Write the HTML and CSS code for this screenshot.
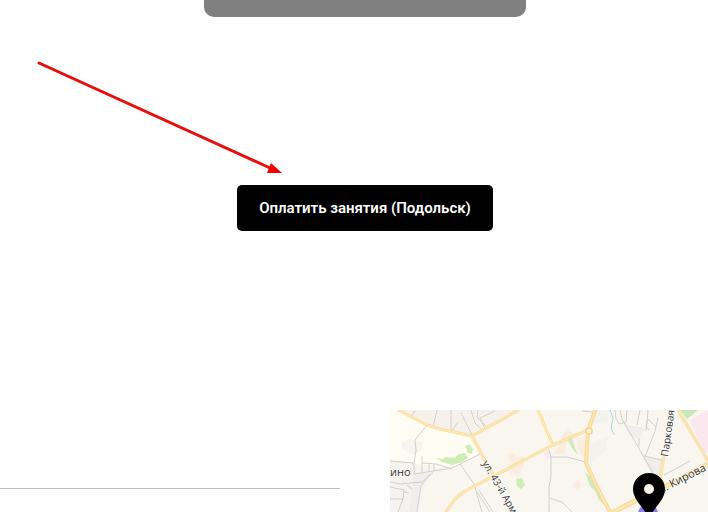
FILE: index.html
```
<!DOCTYPE html>
<html lang="ru">
<head>
    <meta charset="UTF-8">
    <title>Оплата занятий</title>
    <link rel="stylesheet" href="styles.css">
</head>
<body>
<main class="pay">
    <div class="card"></div>
    <button type="button" class="btn">Оплатить занятия (Подольск)</button>
    <svg class="arrow" viewBox="0 0 250 120" aria-hidden="true">
        <path d="M5 7L236 112" stroke="#e90c0c" stroke-width="3" stroke-linecap="round"/>
        <path d="M248 117L233 117L237 107Z" fill="#f40000"/>
    </svg>
</main>
<footer class="contacts">
    <div class="info"><hr class="line"></div>
    <svg class="map" viewBox="390 410 318 102" preserveAspectRatio="xMinYMin slice" role="img" aria-label="Карта">
        <rect x="390" y="410" width="318" height="102" fill="#f9f6ef"/>
        <!-- areas -->
        <path d="M390 410H398L427 425L472 436L480 454L452 468L390 461Z" fill="#fffdf3"/>
        <path d="M400 410H472L520 410L472 435L429 424Z" fill="#f6f2eb"/>
        <path d="M390 461L414 463L431 472L423 490L418 512H390Z" fill="#f5f3f0"/>
        <path d="M402 442L410 438L423 443L422 450L413 455L402 449Z" fill="#f6f5ef"/>
        <path d="M414 474L433 472L422 482L417 512H409Z" fill="#efeeec"/>
        <path d="M595 412L609 410L609 420L594 424ZM590 446L608 436L606 450L590 464Z" fill="#f3f2eb"/>
        <path d="M624 424L645 428L640 439L630 436ZM642 456L662 459L660 480L651 472Z" fill="#efeeea"/>
        <path d="M507 455L511 452L517 457L524 455L524 465L519 476L510 474L513 466ZM563 434L568 429L576 436L567 444L564 455L554 454L558 447ZM573 484L578 480L581 486L577 490L573 488Z" fill="#fbeee1"/>
        <path d="M577 437L588 440L586 458L578 453Z" fill="#fbeee1"/>
        <path d="M690 420L708 410V453L703 452Z" fill="#fbe8ee"/>
        <path d="M544 452L550 450L551 458L546 459Z" fill="#f7e9ef"/>
        <!-- parks -->
        <path d="M436 458L443 459L446 457L454 458L459 454L465 453L468 458L462 462L452 465L442 462ZM465 446L469 444L473 449L472 454L468 453ZM516 479L522 478L525 485L521 489L517 486ZM568 440L572 438L574 445L578 455L573 450ZM585 472L590 476L597 485L601 497L590 486ZM590 478L601 493L606 506L599 500Z" fill="#cfecb4"/>
        <path d="M680 410H698L687 419Z" fill="#c5e9b5"/>
        <!-- small streets -->
        <g fill="none" stroke="#d2d0cd" stroke-width="1">
            <path d="M428 424L415 440L416 450L414 463V474M390 461L414 463M414 474L452 468L480 454M430 474L421 486L417 512"/>
            <path d="M422 456V472M422 463L436 464L452 469M429 463V472M434 464V472M390 482L400 484L422 482L433 473"/>
            <path d="M390 487L404 490L403 499H390M404 492L409 493M403 499L398 512M460 464L474 484L482 512M479 490L493 512M477 492L490 512"/>
            <path d="M415 411L411 417M437 410L433 427M451 410V430M461 413L472 435M458 422L452 431M471 410L475 423L481 429M478 410L477 417L488 428M480 418L495 411M484 427L480 418"/>
            <path d="M549 450L551 457V477L549 487V512M551 457H567L586 462M549 498L562 502L572 512M582 411L593 412"/>
            <path d="M615 410L616 419L619 424L626 422L627 410M620 410L622 419L653 473M640 410L637 425M648 410L646 431M658 418L655 431L645 457M650 430L646 427L648 419L656 427M639 438L639 446M644 456L662 460M664 475L690 461"/>
        </g>
        <path d="M407 485L412 489M610 410L613 418L611 428L614 435" fill="none" stroke="#a5d4ec" stroke-width="1"/>
        <!-- main roads -->
        <g fill="none" stroke-linejoin="round">
            <g stroke="#f5d79c" stroke-width="3">
                <path d="M398 410L427 425L440 429L472 436L490 426L519 410M472 436L482 455L493 474M446 512L455 499L465 491L553 445L588 430M538 410L545 427L553 445M678 410L708 461M664 455L660 480"/>
                <path d="M596 408L588 431L586 463L597 487L610 512" stroke-width="4"/>
                <path d="M610 514L633 502L670 484L708 464" stroke-width="5"/>
            </g>
            <g stroke="#fde7ad" stroke-width="2">
                <path d="M398 410L427 425L440 429L472 436L490 426L519 410M472 436L482 455L493 474M446 512L455 499L465 491L553 445L588 430M538 410L545 427L553 445M678 410L708 461M664 455L660 480"/>
                <path d="M596 408L588 431L586 463L597 487L610 512"/>
                <path d="M610 514L633 502L670 484L708 464" stroke-width="3"/>
            </g>
            <circle cx="589" cy="431" r="3" fill="#f9f6ef" stroke="#f7d994" stroke-width="2"/>
        </g>
        <!-- street names -->
        <g class="street">
            <text x="390" y="476">ино</text>
            <text class="small" transform="translate(482 463) rotate(60)">ул. 43-й Арм</text>
            <text class="small" transform="translate(668 457) rotate(-82)">Парковая</text>
            <text transform="translate(656 496) rotate(-27)">ул. Кирова</text>
        </g>
        <!-- pin -->
        <circle cx="648" cy="514" r="10" fill="#8b7cf0"/>
        <path d="M649 473C640 473 633 480 633 489C633 498 640 504 646 513L649 518L652 513C658 504 665 498 665 489C665 480 658 473 649 473Z" fill="#000"/>
        <circle cx="649" cy="489" r="5" fill="#faf6e8"/>
    </svg>
</footer>
</body>
</html>
```
FILE: styles.css
```
* {
    margin: 0;
    padding: 0;
    box-sizing: border-box;
}

body {
    background: #fff;
    font-family: Roboto, "Liberation Sans", sans-serif;
}

.pay {
    position: relative;
    display: flex;
    flex-direction: column;
    align-items: center;
    padding: 0 0 179px 22px;
}

.card {
    width: 322px;
    height: 17px;
    border-radius: 0 0 10px 10px;
    background: #808080;
}

.btn {
    margin-top: 168px;
    padding: 0 22px;
    height: 46px;
    border: none;
    border-radius: 5px;
    background: #000;
    color: #fff;
    font-family: inherit;
    font-size: 15px;
    font-weight: 600;
    line-height: 24px;
    cursor: pointer;
}

/* arrow lies over the page and points at the button */
.arrow {
    position: absolute;
    top: 56px;
    left: 34px;
    width: 250px;
    height: 120px;
    fill: none;
}

.contacts {
    display: grid;
    grid-template-columns: 340px 1fr;
    column-gap: 50px;
}

.info {
    padding-top: 78px;
}

.line {
    border: none;
    border-top: 1px solid #bfbfbf;
}

.map {
    display: block;
    width: 100%;
    height: 102px;
}

.street {
    font-family: "Open Sans", "Noto Sans", sans-serif;
    font-size: 11px;
    fill: #333;
    stroke: #fff;
    stroke-width: 2px;
    stroke-opacity: 0.6;
    paint-order: stroke;
}

.street .small {
    font-size: 10px;
}
```
